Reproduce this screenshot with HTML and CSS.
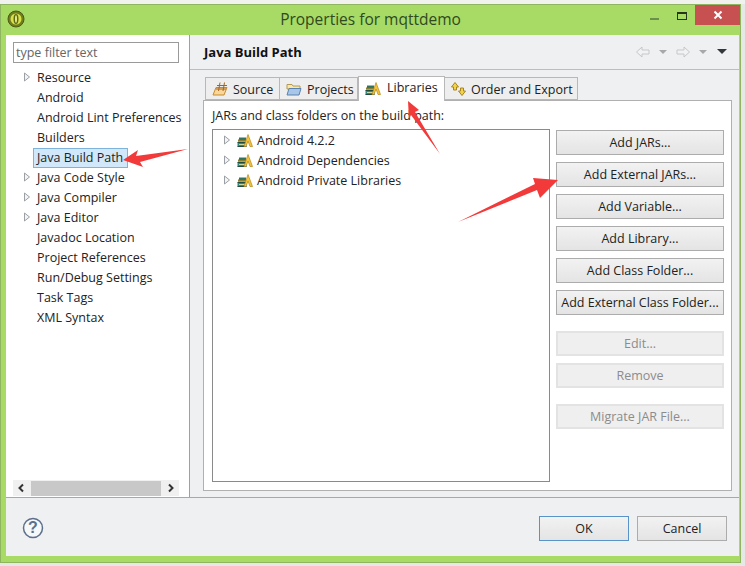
FILE: index.html
```html
<!DOCTYPE html>
<html lang="en">
<head>
<meta charset="utf-8">
<title>Properties for mqttdemo</title>
<link rel="stylesheet" href="styles.css">
</head>
<body>
<svg width="0" height="0" class="defs">
  <defs>
    <symbol id="books" viewBox="0 0 16 16">
      <path d="M2 6h7v2H2z" fill="#3f8f78"/>
      <path d="M2 6h7" stroke="#1f4a40" stroke-width=".8"/>
      <path d="M1 8h8v2.500H1z" fill="#b8a23e"/>
      <path d="M1 8h8" stroke="#4a4a20" stroke-width=".8"/>
      <path d="M0.500 10.500h9v4h-9z" fill="#2e8a7a"/>
      <path d="M0.500 10.500h9M0.500 14.500h9" stroke="#1f4a40"/>
      <path d="M2 12.500h7" stroke="#c8d8a0"/>
      <path d="M11 2.500 15.500 14.500H13L11 9l-2 5.500H7z" fill="#f2c53a" stroke="#b5851e" stroke-width=".7"/>
    </symbol>
    <symbol id="twisty" viewBox="0 0 8 10">
      <path d="M1.500 1 6.500 5 1.500 9z" fill="#f4f4f4" stroke="#9aa0a6"/>
    </symbol>
  </defs>
</svg>
<div class="desktop-strip"></div>
<div class="window">
  <header class="titlebar">
    <svg class="app-icon" viewBox="0 0 18 18" width="18" height="18">
      <circle cx="9" cy="9" r="8" fill="#6f7d1c" stroke="#4f5a12"/>
      <circle cx="9" cy="9" r="5.500" fill="#d8e04a"/>
      <ellipse cx="9" cy="9" rx="2.500" ry="5" fill="#5d6a16"/>
      <ellipse cx="9" cy="9" rx="1" ry="3.800" fill="#e8ee88"/>
    </svg>
    <h1 class="title">Properties for mqttdemo</h1>
    <div class="controls">
      <span class="ctl-min"></span>
      <span class="ctl-max"></span>
      <span class="ctl-close">
        <svg viewBox="0 0 10 10" width="10" height="10"><path d="M1.500 1.500l7 7M8.500 1.500l-7 7" stroke="#fff" stroke-width="2"/></svg>
      </span>
    </div>
  </header>
  <div class="client">
    <div class="main">
      <aside class="sidebar">
        <input class="filter" type="text" placeholder="type filter text">
        <ul class="tree">
          <li class="node"><svg class="twisty"><use href="#twisty"/></svg><span>Resource</span></li>
          <li class="node"><span>Android</span></li>
          <li class="node"><span>Android Lint Preferences</span></li>
          <li class="node"><span>Builders</span></li>
          <li class="node"><span class="selected">Java Build Path</span></li>
          <li class="node"><svg class="twisty"><use href="#twisty"/></svg><span>Java Code Style</span></li>
          <li class="node"><svg class="twisty"><use href="#twisty"/></svg><span>Java Compiler</span></li>
          <li class="node"><svg class="twisty"><use href="#twisty"/></svg><span>Java Editor</span></li>
          <li class="node"><span>Javadoc Location</span></li>
          <li class="node"><span>Project References</span></li>
          <li class="node"><span>Run/Debug Settings</span></li>
          <li class="node"><span>Task Tags</span></li>
          <li class="node"><span>XML Syntax</span></li>
        </ul>
        <div class="hscroll">
          <svg class="sb-arrow" viewBox="0 0 8 10" width="8" height="10"><path d="M6 1.500 2.500 5 6 8.500" fill="none" stroke="#333" stroke-width="2"/></svg>
          <span class="thumb"></span>
          <svg class="sb-arrow" viewBox="0 0 8 10" width="8" height="10"><path d="M2 1.500 5.500 5 2 8.500" fill="none" stroke="#333" stroke-width="2"/></svg>
        </div>
      </aside>
      <section class="content">
        <div class="page-head">
          <h2 class="page-title">Java Build Path</h2>
          <div class="nav">
            <svg viewBox="0 0 16 14" width="16" height="14"><path d="M1.500 7 7 2v3h7v4H7v3z" fill="#f2f2f2" stroke="#c4c8cc"/></svg>
            <svg viewBox="0 0 8 4" width="8" height="4"><path d="M0 0h8L4 4z" fill="#a8a8a8"/></svg>
            <svg viewBox="0 0 16 14" width="16" height="14"><path d="M14.500 7 9 2v3H2v4h7v3z" fill="#f2f2f2" stroke="#c4c8cc"/></svg>
            <svg viewBox="0 0 8 4" width="8" height="4"><path d="M0 0h8L4 4z" fill="#a8a8a8"/></svg>
            <svg class="caret-dark" viewBox="0 0 10 5" width="10" height="5"><path d="M0 0h10L5 5z" fill="#33373d"/></svg>
          </div>
        </div>
        <div class="tabs">
          <div class="tab tab-source">
            <svg viewBox="0 0 16 16" width="16" height="16"><path d="M1 14 4 6.500h11l-3 7.500z" fill="#f8d89a" stroke="#c98a2a"/><path d="M8 1.500 6.500 10M12.500 1.500 11 10M5 4.500h10M4 8h10" stroke="#a8641a" fill="none"/></svg>
            <span>Source</span>
          </div>
          <div class="tab tab-projects">
            <svg viewBox="0 0 16 16" width="16" height="16"><path d="M1 3.500h5l1 1.500h7v3H1z" fill="#fbe7a8" stroke="#b49a50"/><path d="M1 14 3 7.500h12L13 14z" fill="#a8c6e8" stroke="#5a82b0"/></svg>
            <span>Projects</span>
          </div>
          <div class="tab tab-active">
            <svg width="16" height="16"><use href="#books"/></svg>
            <span>Libraries</span>
          </div>
          <div class="tab tab-order">
            <svg viewBox="0 0 17 16" width="17" height="16"><path d="M5 1.500 8.500 6H6.500v3h-3V6h-2z" fill="#f4d24a" stroke="#a8841e"/><path d="M12 14.500 8.500 10h2V7h3v3h2z" fill="#f4d24a" stroke="#a8841e"/></svg>
            <span>Order and Export</span>
          </div>
        </div>
        <div class="panel">
          <p class="panel-label">JARs and class folders on the build path:</p>
          <div class="panel-body">
            <ul class="libs">
              <li class="lib"><svg class="twisty"><use href="#twisty"/></svg><svg class="lib-icon"><use href="#books"/></svg><span>Android 4.2.2</span></li>
              <li class="lib"><svg class="twisty"><use href="#twisty"/></svg><svg class="lib-icon"><use href="#books"/></svg><span>Android Dependencies</span></li>
              <li class="lib"><svg class="twisty"><use href="#twisty"/></svg><svg class="lib-icon"><use href="#books"/></svg><span>Android Private Libraries</span></li>
            </ul>
            <div class="actions">
              <button class="btn" type="button">Add JARs...</button>
              <button class="btn" type="button">Add External JARs...</button>
              <button class="btn" type="button">Add Variable...</button>
              <button class="btn" type="button">Add Library...</button>
              <button class="btn" type="button">Add Class Folder...</button>
              <button class="btn" type="button">Add External Class Folder...</button>
              <button class="btn btn-off gap-a" type="button" disabled>Edit...</button>
              <button class="btn btn-off" type="button" disabled>Remove</button>
              <button class="btn btn-off gap-b" type="button" disabled>Migrate JAR File...</button>
            </div>
          </div>
        </div>
      </section>
    </div>
    <footer class="footer">
      <svg class="help" viewBox="0 0 22 22" width="22" height="22">
        <circle cx="11" cy="11" r="9.500" fill="#f6f7f9" stroke="#5d6f8c" stroke-width="1.500"/>
        <text x="11" y="16" text-anchor="middle" class="help-q">?</text>
      </svg>
      <div class="footer-btns">
        <button class="btn btn-default" type="button">OK</button>
        <button class="btn btn-cancel" type="button">Cancel</button>
      </div>
    </footer>
  </div>
</div>
<svg class="arrows" viewBox="0 0 745 566" width="745" height="566">
  <path d="M123 160 138 150 136 156 188 149 140 162 143 167z"/>
  <path d="M408 101 419 110 415 112 440 154 411 115 409 119z"/>
  <path d="M558 180 540 198 537 190 458 222 535 184 533 178z"/>
</svg>
</body>
</html>
```
FILE: styles.css
```css
* { box-sizing: border-box; }
html, body { margin: 0; height: 100%; }
body {
  position: relative;
  width: 745px;
  height: 566px;
  overflow: hidden;
  background: #e6e8e6;
  font-family: "Open Sans", "Noto Sans", sans-serif;
  font-size: 12.5px;
  color: #222;
}
.defs { position: absolute; }
.desktop-strip { height: 4px; background: #f1f1ee; }
.window {
  width: 741px;
  height: 559px;
  background: #a8da66;
  border: 1px solid #8fb560;
  display: flex;
  flex-direction: column;
}
.titlebar {
  height: 30px;
  display: flex;
  align-items: center;
  position: relative;
  flex: none;
}
.app-icon { margin: 0 0 2px 6px; }
.title {
  position: absolute;
  left: 0;
  right: 0;
  margin: 0;
  text-align: center;
  font-size: 15.5px;
  font-weight: 400;
  color: #2f4a1e;
  padding-bottom: 2px;
}
.controls {
  position: absolute;
  top: 0;
  right: 0;
  display: flex;
  align-items: flex-start;
}
.ctl-min { width: 9px; height: 2px; background: #6d8f4a; margin: 13px 18px 0 0; }
.ctl-max { width: 10px; height: 8px; border: 1px solid #26361a; border-top-width: 2px; margin: 7px 8px 0 0; }
.ctl-close {
  width: 45px;
  height: 20px;
  background: #c75050;
  display: flex;
  align-items: center;
  justify-content: center;
}
.client {
  flex: 1;
  margin: 0 1px 6px 5px;
  display: flex;
  flex-direction: column;
  background: #eff0f1;
  min-height: 0;
}
.main {
  flex: 1;
  display: flex;
  min-height: 0;
  border-bottom: 1px solid #a8a8a8;
}
.sidebar {
  width: 184px;
  flex: none;
  background: #fff;
  border-right: 1px solid #a0a0a0;
  padding: 7px 10px 1px 7px;
  display: flex;
  flex-direction: column;
}
.filter {
  width: 166px;
  height: 21px;
  flex: none;
  border: 1px solid #9a9a9a;
  padding: 0 2px;
  font: inherit;
  color: #666;
  outline: none;
}
.filter::placeholder { color: #666; opacity: 1; }
.tree { list-style: none; margin: 4px 0 0; padding: 0; flex: 1; }
.node {
  height: 20px;
  display: flex;
  align-items: center;
  padding-left: 24px;
  position: relative;
  white-space: nowrap;
}
.node .twisty { position: absolute; left: 10px; top: 5px; }
.twisty { width: 8px; height: 10px; flex: none; }
.selected {
  background: #d1e8fa;
  border: 1px solid #7eb4dc;
  margin: 1px 0 0 -4px;
  padding: 0 0 0 3px;
  width: 95px;
  height: 20px;
  line-height: 17px;
  overflow: hidden;
}
.hscroll {
  width: 166px;
  height: 16px;
  flex: none;
  display: flex;
  align-items: center;
  justify-content: space-between;
  background: #f0f0f0;
  padding: 0 4px;
}
.thumb { width: 130px; height: 15px; background: #c8c8c8; }
.content {
  flex: 1;
  min-width: 0;
  padding-right: 7px;
  display: flex;
  flex-direction: column;
}
.page-head {
  height: 35px;
  flex: none;
  display: flex;
  align-items: center;
  justify-content: space-between;
  border-bottom: 1px solid #bdbdbd;
  margin-right: -7px;
  padding: 0 12px 1px 14px;
}
.page-title { margin: 0; font-size: 13px; font-weight: 700; color: #111; }
.nav { display: flex; align-items: center; gap: 8px; }
.caret-dark { margin-left: 2px; }
.tabs {
  display: flex;
  align-items: flex-end;
  height: 31px;
  flex: none;
  padding-left: 15px;
  margin-bottom: -1px;
  position: relative;
  z-index: 1;
}
.tab {
  height: 23px;
  display: flex;
  align-items: center;
  gap: 5px;
  padding: 1px 0 0 6px;
  background: #eeeeee;
  border: 1px solid #b8b8b8;
  margin-bottom: 1px;
  white-space: nowrap;
}
.tab-source { width: 75px; }
.tab-projects { width: 78px; border-left: 0; }
.tab-active {
  width: 87px;
  height: 25px;
  background: #fff;
  border-bottom: 0;
  margin-bottom: 0;
  padding: 0 0 3px 6px;
  gap: 6px;
}
.tab-order { width: 133px; border-left: 0; gap: 4px; padding-left: 5px; }
.panel {
  flex: 1;
  min-height: 0;
  margin: 0 0 6px 13px;
  background: #fff;
  border: 1px solid #b0b0b0;
  padding: 0 7px 8px 8px;
  display: flex;
  flex-direction: column;
}
.panel-label { margin: 6px 0 5px; line-height: 17px; height: 17px; white-space: nowrap; }
.panel-body { flex: 1; display: flex; gap: 6px; min-height: 0; }
.libs {
  list-style: none;
  margin: 0;
  padding: 0 0 0 10px;
  width: 338px;
  flex: none;
  border: 1px solid #8a8a8a;
}
.lib { height: 20px; display: flex; align-items: center; white-space: nowrap; }
.lib-icon { width: 16px; height: 16px; margin: 0 4px 0 6px; flex: none; }
.actions { flex: 1; display: flex; flex-direction: column; gap: 7px; padding-top: 1px; }
.btn {
  height: 25px;
  flex: none;
  padding: 0;
  font: inherit;
  color: #222;
  background: linear-gradient(#f2f2f2, #e4e4e4);
  border: 1px solid #acacac;
  border-radius: 0;
}
.btn-off {
  background: #efefef;
  border: 2px solid #e3e3e3;
  color: #8c8c8c;
}
.gap-a { margin-top: 9px; }
.gap-b { margin-top: 9px; }
.footer {
  height: 58px;
  flex: none;
  display: flex;
  align-items: center;
  justify-content: space-between;
  padding: 0 12px 0 16px;
}
.help { margin-top: 2px; }
.help-q { font-size: 16px; font-weight: 700; fill: #5d6f8c; font-family: "Liberation Sans", sans-serif; }
.footer-btns { display: flex; gap: 8px; margin-top: 3px; }
.btn-default { width: 90px; border-color: #5a93c8; }
.btn-cancel { width: 90px; }
.arrows { position: absolute; left: 0; top: 0; pointer-events: none; }
.arrows path { fill: #f23a3a; }
```
